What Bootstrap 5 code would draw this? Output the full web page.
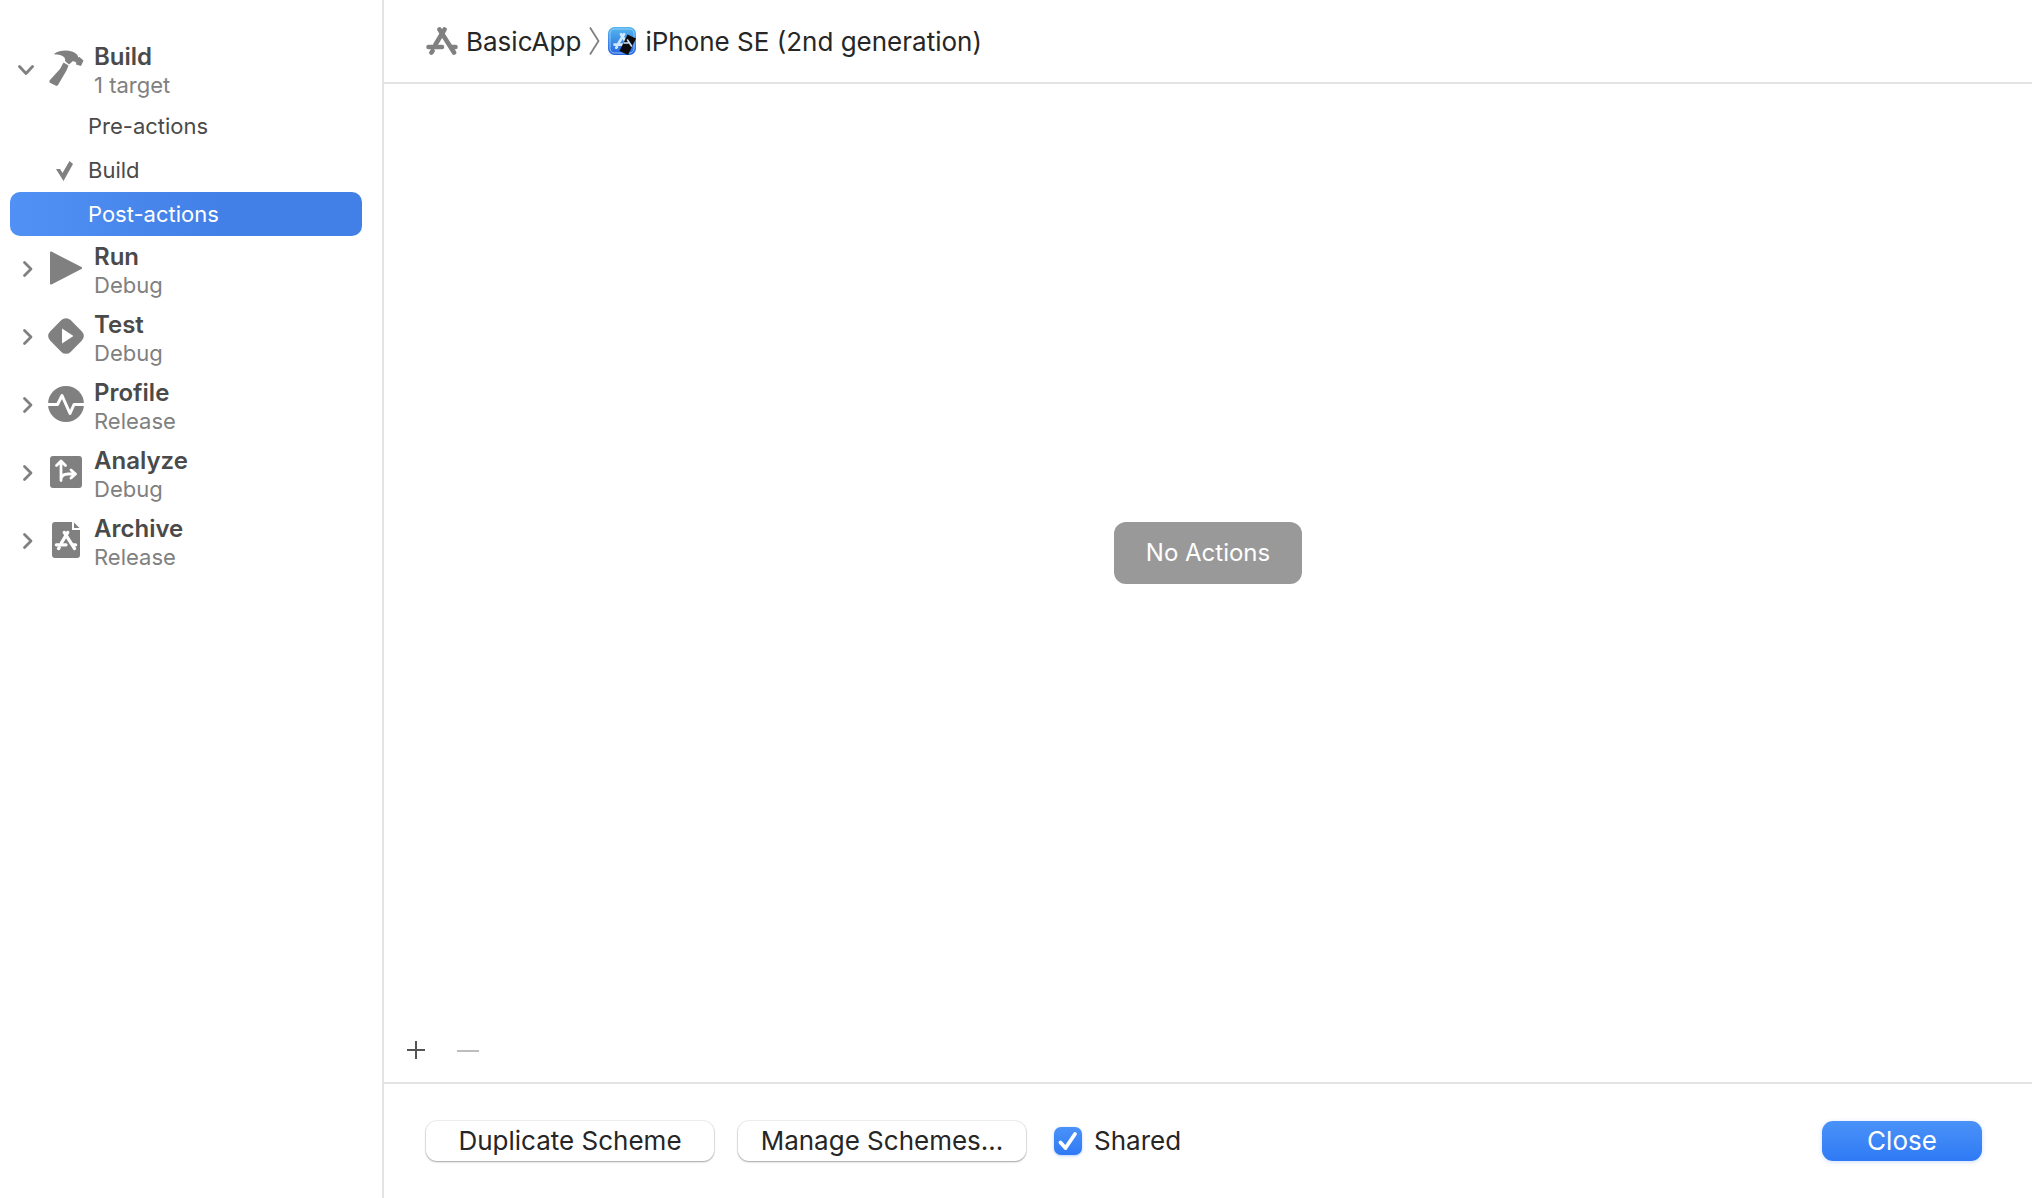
<!DOCTYPE html>
<html lang="en">
<head>
<meta charset="utf-8">
<meta name="viewport" content="width=device-width, initial-scale=1">
<title>BasicApp scheme</title>
<link href="https://cdn.jsdelivr.net/npm/bootstrap@5.3.0/dist/css/bootstrap.min.css" rel="stylesheet">
<style>
  :root { --rule: #e3e3e3; --glyph: #808080; --ink: #262626; --side-ink: #4a4a4a; }
  body { font-family: Inter, "Liberation Sans", sans-serif; color: var(--ink); background: #fff; }
  svg { display: block; flex: none; }
  .sidebar { flex: 0 0 384px; border-right: 2px solid var(--rule); padding: 36px 20px 0 10px; }
  .phase { height: 68px; padding-bottom: 4px; }
  .twisty { border: 0; background: none; padding: 0; width: 24px; margin: 2px 14px 0 0; color: var(--glyph); }
  .phase-link { color: var(--side-ink); gap: 10px; }
  .phase-name { font-size: 24px; line-height: 28px; font-weight: 600; padding-top: 6px; }
  .phase-note { font-size: 22px; line-height: 28px; color: var(--glyph); }
  .step { height: 44px; border-radius: 10px; color: var(--side-ink); font-size: 22px; padding: 1px 0 0 46px; }
  .step-tick { width: 17px; margin-right: 15px; }
  .step.active { color: #fff; background: linear-gradient(90deg, #5191f5, #427fe6 60%); }
  .crumbs { height: 84px; border-bottom: 2px solid var(--rule); padding-left: 42px; font-size: 26px; }
  .crumbs a { color: var(--ink); }
  .crumb-sep { margin: 0 6px; }
  .empty-note { background: #999; color: #fff; border-radius: 12px; font-size: 24px; line-height: 30px; padding: 16px 32px; }
  .tools { height: 62px; border-bottom: 2px solid var(--rule); padding: 0 16px 4px; gap: 20px; }
  .tool { border: 0; background: none; width: 32px; height: 32px; padding: 0; display: grid; place-items: center; color: #555; }
  .tool:disabled { color: #bdbdbd; }
  .actions { padding: 37px 50px 37px 42px; gap: 24px; }
  .push { height: 40px; border: 0; border-radius: 11px; font-size: 26px; line-height: 40px; padding: 0; color: var(--ink); background: #fff;
    width: 288px; box-shadow: 0 0 0 1px rgba(0,0,0,.06), 0 1px 2px rgba(0,0,0,.32); }
  .push-main { width: 160px; color: #fff; background: linear-gradient(#4a92f8, #2f7af5); box-shadow: 0 1px 4px rgba(47,122,245,.25); }
  .shared { gap: 12px; margin-left: 4px; font-size: 26px; line-height: 40px; }
  .shared .form-check-input { width: 28px; height: 28px; margin: 0; border: 0; border-radius: 7px; box-shadow: 0 1px 3px rgba(47,122,245,.35); }
  .shared .form-check-input:checked { background-color: #2f7af5; background-size: 100% 100%;
    background-image: url("data:image/svg+xml,%3Csvg xmlns='http://www.w3.org/2000/svg' viewBox='0 0 28 28'%3E%3Cpath d='M6.5 15.5 11.5 21 21 7' fill='none' stroke='white' stroke-width='3.8' stroke-linecap='round' stroke-linejoin='round'/%3E%3C/svg%3E"), linear-gradient(#4a92f8, #2f7af5); }
</style>
<script src="https://cdn.jsdelivr.net/npm/bootstrap@5.3.0/dist/js/bootstrap.bundle.min.js"></script>
</head>
<body>
<svg class="d-none" aria-hidden="true">
  <symbol id="chev-right" viewBox="0 0 24 24"><path d="M14.500 5.500 21 12 14.500 18.500" fill="none" stroke="currentColor" stroke-width="2.800" stroke-linecap="round" stroke-linejoin="round"/></symbol>
  <symbol id="chev-down" viewBox="0 0 24 24"><path d="M9.500 9.500 16 16.500 22.500 9.500" fill="none" stroke="currentColor" stroke-width="2.800" stroke-linecap="round" stroke-linejoin="round"/></symbol>
  <symbol id="app-mark" viewBox="0 0 32 28"><g fill="none" stroke="currentColor" stroke-width="4.600" stroke-linecap="round"><path d="M18.500 2.500 9.500 17.500"/><path d="M13.500 2.500 28 25.500"/><path d="M2.500 20H16M26 20h3.500"/><path d="M6.500 24 5.500 25.500"/></g></symbol>
</svg>
<div class="d-flex min-vh-100">
  <nav class="sidebar" aria-label="Scheme phases">
    <ul class="list-unstyled m-0">
      <li>
        <div class="phase d-flex align-items-center">
          <button class="twisty" aria-label="Collapse Build"><svg width="24" height="24"><use href="#chev-down"/></svg></button>
          <a href="#" class="phase-link d-flex align-items-center text-decoration-none">
            <svg width="36" height="36" viewBox="0 0 36 36" fill="#808080"><path d="M6.500 3.500C12-.5 24-1 29 4.500c.8 1 .8 2 1.500 3l1-.5 4 3.500-2.500 5.500-5-1.500.3-2-3.300-1.500-4 3.500-4-3.500C18 7 14 4.500 6.500 4.500Z"/><path d="M15.500 12.500 20.500 15.500 18.500 20.500 10 35 8.500 36 1.500 32.500 1.500 30.500 12 19Z"/></svg>
            <span><span class="phase-name d-block">Build</span><span class="phase-note d-block">1 target</span></span>
          </a>
        </div>
        <ul class="list-unstyled m-0">
          <li><a href="#" class="step d-flex align-items-center text-decoration-none"><span class="step-tick"></span>Pre-actions</a></li>
          <li><a href="#" class="step d-flex align-items-center text-decoration-none"><svg class="step-tick" height="20" viewBox="0 0 17 20"><path d="M0 8 4 8 6.500 12 13.500 0 17 3 7.500 20Z" fill="#808080"/></svg>Build</a></li>
          <li><a href="#" class="step active d-flex align-items-center text-decoration-none" aria-current="page"><span class="step-tick"></span>Post-actions</a></li>
        </ul>
      </li>
      <li class="phase d-flex align-items-center">
        <button class="twisty" aria-label="Expand Run"><svg width="24" height="24"><use href="#chev-right"/></svg></button>
        <a href="#" class="phase-link d-flex align-items-center text-decoration-none">
          <svg width="36" height="36" viewBox="0 0 36 36"><path d="M3 2.500 33 18 3 33.500Z" fill="#808080" stroke="#808080" stroke-width="2" stroke-linejoin="round"/></svg>
          <span><span class="phase-name d-block">Run</span><span class="phase-note d-block">Debug</span></span>
        </a>
      </li>
      <li class="phase d-flex align-items-center">
        <button class="twisty" aria-label="Expand Test"><svg width="24" height="24"><use href="#chev-right"/></svg></button>
        <a href="#" class="phase-link d-flex align-items-center text-decoration-none">
          <svg width="36" height="36" viewBox="0 0 36 36"><rect x="3.500" y="3.500" width="29" height="29" rx="6.500" fill="#808080" transform="rotate(45 18 18)"/><path d="M14 10.500 25.500 18 14 25.500Z" fill="#fff"/></svg>
          <span><span class="phase-name d-block">Test</span><span class="phase-note d-block">Debug</span></span>
        </a>
      </li>
      <li class="phase d-flex align-items-center">
        <button class="twisty" aria-label="Expand Profile"><svg width="24" height="24"><use href="#chev-right"/></svg></button>
        <a href="#" class="phase-link d-flex align-items-center text-decoration-none">
          <svg width="36" height="36" viewBox="0 0 36 36"><circle cx="18" cy="18" r="18" fill="#808080"/><path d="M0 18.500H9.500L14 9.500 22 27.500 26 18.500H36" fill="none" stroke="#fff" stroke-width="3" stroke-linejoin="round"/></svg>
          <span><span class="phase-name d-block">Profile</span><span class="phase-note d-block">Release</span></span>
        </a>
      </li>
      <li class="phase d-flex align-items-center">
        <button class="twisty" aria-label="Expand Analyze"><svg width="24" height="24"><use href="#chev-right"/></svg></button>
        <a href="#" class="phase-link d-flex align-items-center text-decoration-none">
          <svg width="36" height="36" viewBox="0 0 36 36"><rect x="2" y="2" width="32" height="32" rx="3" fill="#808080"/><path d="M13 26.500V8M8.500 11.500 13 7 17.500 11.500M13 25C13.500 21.500 16 20 20 20H27M23 16 27.500 20 23 24" fill="none" stroke="#fff" stroke-width="2.800" stroke-linecap="round" stroke-linejoin="round"/></svg>
          <span><span class="phase-name d-block">Analyze</span><span class="phase-note d-block">Debug</span></span>
        </a>
      </li>
      <li class="phase d-flex align-items-center">
        <button class="twisty" aria-label="Expand Archive"><svg width="24" height="24"><use href="#chev-right"/></svg></button>
        <a href="#" class="phase-link d-flex align-items-center text-decoration-none">
          <svg width="36" height="36" viewBox="0 0 36 36" fill="#808080"><path d="M7 0H24V8H32V33a3 3 0 0 1-3 3H7a3 3 0 0 1-3-3V3a3 3 0 0 1 3-3Z"/><path d="M26 .5 31.500 6H26Z"/><use href="#app-mark" x="6" y="8.500" width="24" height="20" color="#fff"/></svg>
          <span><span class="phase-name d-block">Archive</span><span class="phase-note d-block">Release</span></span>
        </a>
      </li>
    </ul>
  </nav>
  <main class="flex-grow-1 d-flex flex-column">
    <header class="crumbs d-flex align-items-center">
      <a href="#" class="d-flex align-items-center gap-2 text-decoration-none"><svg width="32" height="28" color="#808080"><use href="#app-mark"/></svg>BasicApp</a>
      <svg class="crumb-sep" width="14" height="28" viewBox="0 0 14 28"><path d="M3 .5 11.500 14 3 27.500" fill="none" stroke="#808080" stroke-width="1.800"/></svg>
      <a href="#" class="d-flex align-items-center gap-2 text-decoration-none">
        <svg width="30" height="30" viewBox="0 0 30 30"><defs><linearGradient id="sky" x2="0" y2="1"><stop stop-color="#55b7ee"/><stop offset="1" stop-color="#2463e0"/></linearGradient></defs><rect x="1" y="1" width="28" height="28" rx="6.500" fill="url(#sky)"/><rect x="3" y="3" width="24" height="24" rx="4.500" fill="none" stroke="#a9d6fa" stroke-width=".8"/><use href="#app-mark" x="6" y="6.500" width="19" height="17" color="#cfe8ff"/><path d="M20.500 8.500 29 12.500 21 29 12.500 25Z" fill="#0c0c0c"/><path d="M17 17h4M20.500 14l4 6" stroke="#cfe8ff" stroke-width="1.600" stroke-linecap="round"/></svg>
        iPhone SE (2nd generation)</a>
    </header>
    <section class="flex-grow-1 d-flex align-items-center justify-content-center">
      <div class="empty-note">No Actions</div>
    </section>
    <div class="tools d-flex align-items-center">
      <button class="tool" aria-label="Add action"><svg width="18" height="18" viewBox="0 0 18 18"><path d="M0 9H18M9 0V18" stroke="currentColor" stroke-width="2"/></svg></button>
      <button class="tool" aria-label="Remove action" disabled><svg width="22" height="18" viewBox="0 0 22 18"><path d="M0 10H22" stroke="currentColor" stroke-width="2"/></svg></button>
    </div>
    <footer class="actions d-flex align-items-center">
      <button class="push">Duplicate Scheme</button>
      <button class="push">Manage Schemes...</button>
      <div class="shared d-flex align-items-center">
        <input class="form-check-input" type="checkbox" id="shared" checked>
        <label for="shared">Shared</label>
      </div>
      <button class="push push-main ms-auto">Close</button>
    </footer>
  </main>
</div>
</body>
</html>
